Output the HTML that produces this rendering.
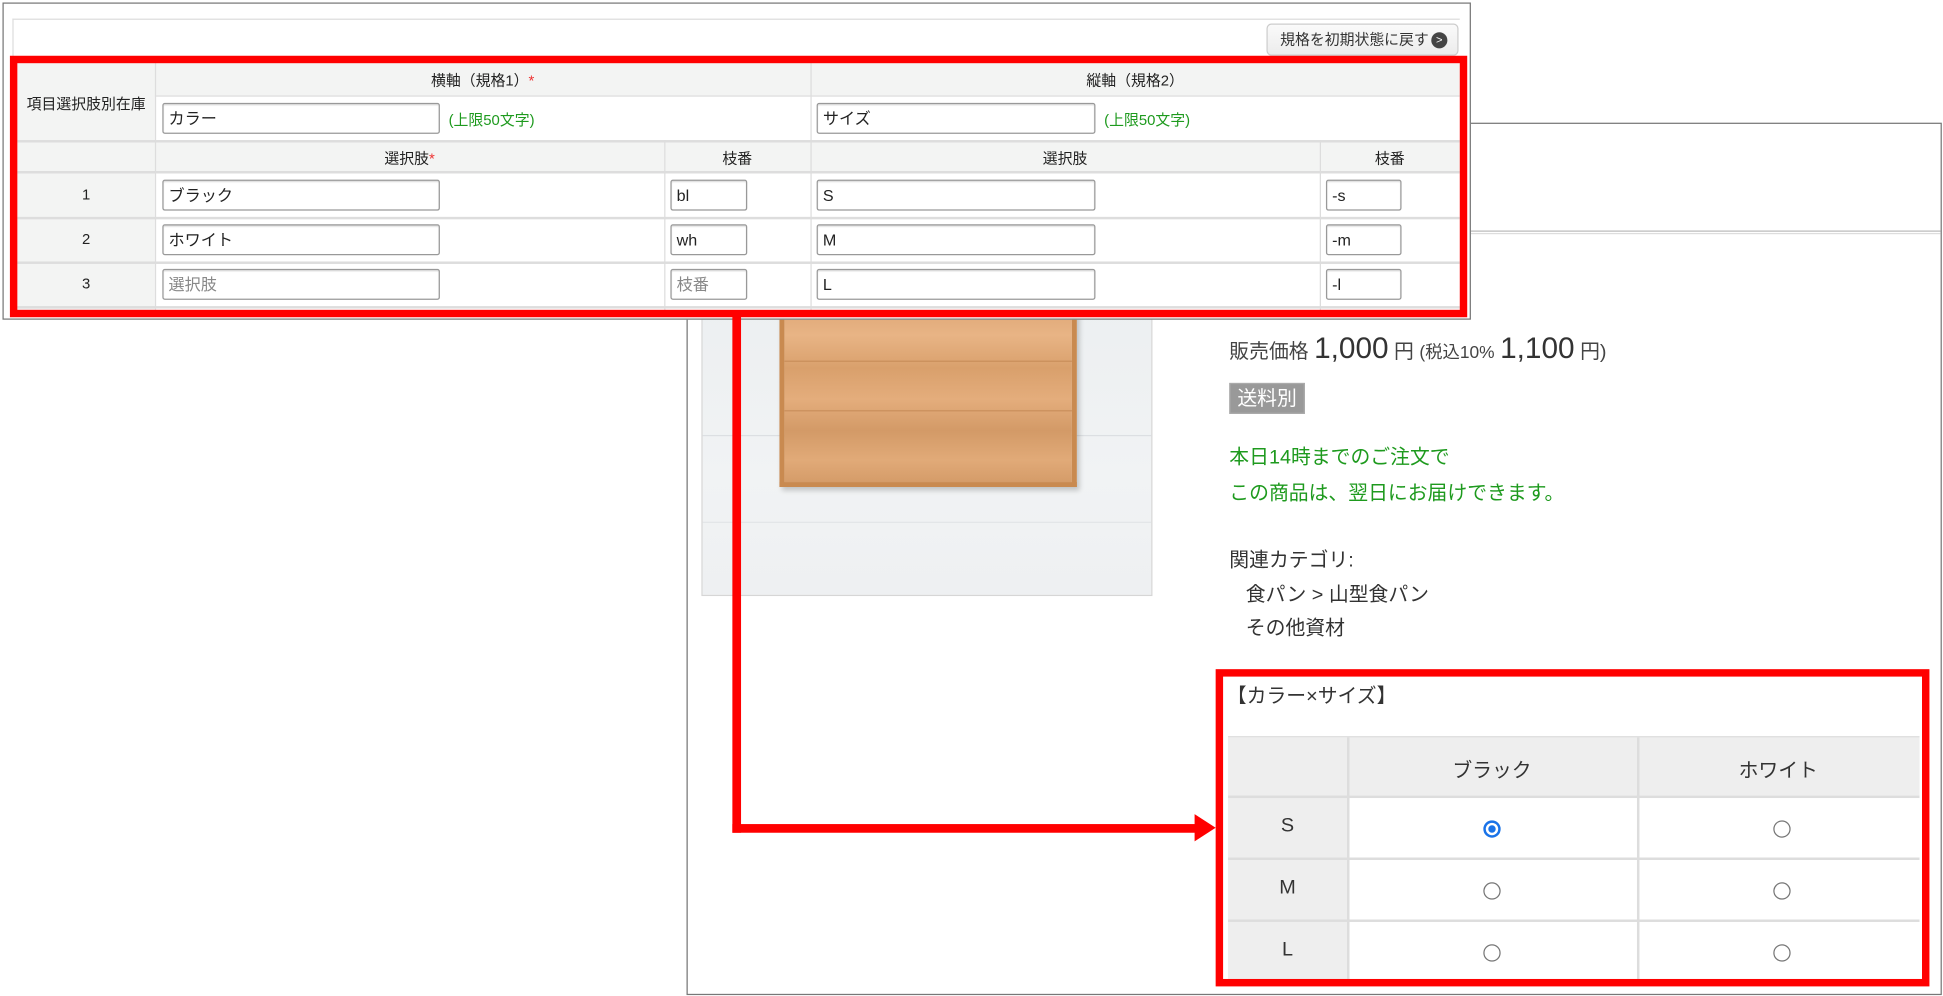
<!DOCTYPE html>
<html><head><meta charset="utf-8"><style>
*{box-sizing:border-box;margin:0;padding:0}
html,body{width:1943px;height:996px;overflow:hidden;background:#fff}
#w{position:absolute;left:0;top:0;width:1568px;height:804px;transform:scale(1.2392);transform-origin:0 0;font-family:"Liberation Sans","Noto Sans CJK JP",sans-serif;color:#333}
.a{position:absolute}
.inp{position:absolute;height:25px;border:1px solid #999;border-radius:2px;background:#fff;font-size:13px;padding-left:4px;line-height:23px;color:#222;box-shadow:inset 0 1px 1px #ddd}
.ph{color:#888}
.c{position:absolute;font-size:12px;text-align:center;color:#222}
.hl{position:absolute;height:1px;background:#ddd}
.vl{position:absolute;width:1px;background:#ddd}
.red{position:absolute;background:#f00}
.t2{font-size:16px;color:#333}
.rad{position:absolute;width:14px;height:14px;border:1px solid #767676;border-radius:50%;background:#fff}
</style></head><body><div id="w">
<div class="a" style="left:554px;top:99px;width:1013px;height:704px;border:1px solid #777;background:#fff"></div>
<div class="a" style="left:555px;top:186px;width:1011px;height:3px;border-top:1px solid #bbb;border-bottom:1px solid #ddd"></div>
<div class="a" style="left:566px;top:240px;width:364px;height:241px;background:linear-gradient(180deg,#eceff1,#f1f3f4 60%,#eef0f2);border:1px solid #d6d6d6">
 <div class="a" style="left:0;top:110px;width:362px;height:1px;background:#dcdfe2"></div>
 <div class="a" style="left:0;top:180px;width:362px;height:1px;background:#e2e5e7"></div>
 <div class="a" style="left:62px;top:0;width:240px;height:152px;background:linear-gradient(180deg,#dca372 0%,#e8b485 20%,#d9a06c 38%,#e4ad7c 55%,#d39a67 72%,#e1aa78 88%,#d59c69 100%);border:4px solid #c98a50;border-top:none;box-shadow:2px 3px 4px rgba(0,0,0,.2)">
  <div class="a" style="left:0;top:50px;width:232px;height:1px;background:#c98f5c"></div>
  <div class="a" style="left:0;top:90px;width:232px;height:1px;background:#c98f5c"></div>
 </div>
</div>
<div class="a t2" style="left:992px;top:268px;white-space:nowrap;color:#444">販売価格 <span style="font-size:24px;color:#333">1,000</span> 円 <span style="font-size:14px">(税込10%</span> <span style="font-size:24px;color:#333">1,100</span> 円)</div>
<div class="a" style="left:992px;top:309px;width:61px;height:25px;background:#999;color:#fff;font-size:16px;line-height:25px;text-align:center;border:1px solid #aaa">送料別</div>
<div class="a t2" style="left:992px;top:355px;color:#1e9a1e;line-height:29px">本日14時までのご注文で<br>この商品は、翌日にお届けできます。</div>
<div class="a t2" style="left:992px;top:439px;line-height:27.5px;color:#333">関連カテゴリ:<br>&nbsp;&nbsp;&nbsp;食パン &gt; 山型食パン<br>&nbsp;&nbsp;&nbsp;その他資材</div>
<div class="a t2" style="left:990px;top:548px">【カラー×サイズ】</div>
<div class="a" style="left:991px;top:594px;width:558px;height:196px;background:#fff;border-top:2px solid #ddd"></div>
<div class="a" style="left:991px;top:595px;width:558px;height:47px;background:#eee"></div>
<div class="a" style="left:991px;top:595px;width:96px;height:196px;background:#eee"></div>
<div class="hl" style="left:991px;top:642px;width:558px;height:2px"></div>
<div class="hl" style="left:991px;top:692px;width:558px;height:2px"></div>
<div class="hl" style="left:991px;top:742px;width:558px;height:2px"></div>
<div class="vl" style="left:1087px;top:595px;height:196px;width:2px"></div>
<div class="vl" style="left:1321px;top:595px;height:196px;width:2px"></div>
<div class="a t2" style="left:1087px;top:608px;width:234px;text-align:center">ブラック</div>
<div class="a t2" style="left:1321px;top:608px;width:228px;text-align:center">ホワイト</div>
<div class="a t2" style="left:991px;top:658px;width:96px;text-align:center">S</div>
<div class="a t2" style="left:991px;top:708px;width:96px;text-align:center">M</div>
<div class="a t2" style="left:991px;top:758px;width:96px;text-align:center">L</div>
<div class="rad" style="left:1197px;top:662px;border:2px solid #1a73e8"><div class="a" style="left:2px;top:2px;width:6px;height:6px;border-radius:50%;background:#1a73e8"></div></div>
<div class="rad" style="left:1431px;top:662px"></div>
<div class="rad" style="left:1197px;top:712px"></div>
<div class="rad" style="left:1431px;top:712px"></div>
<div class="rad" style="left:1197px;top:762px"></div>
<div class="rad" style="left:1431px;top:762px"></div>
<div class="a" style="left:981px;top:540px;width:576px;height:256px;border:6px solid #f00"></div>
<div class="a" style="left:2px;top:2px;width:1185px;height:256px;border:1px solid #777;background:#fff"></div>
<div class="a" style="left:10px;top:15px;width:1168px;height:240px;border-top:1px solid #ddd;border-left:1px solid #ddd"></div>
<div class="a" style="left:1022px;top:19px;width:155px;height:26px;border:1px solid #ccc;border-radius:4px;background:linear-gradient(#fafafa,#ececec);font-size:12px;line-height:24px;padding-left:10px;color:#333">規格を初期状態に戻す<span class="a" style="left:132px;top:6px;width:13px;height:13px;border-radius:50%;background:#444;color:#fff;font-size:9px;line-height:13px;text-align:center">&gt;</span></div>
<div class="a" style="left:14px;top:50px;width:1164px;height:27px;background:#f3f4f3"></div>
<div class="a" style="left:14px;top:113px;width:1164px;height:25px;background:#f3f4f3"></div>
<div class="a" style="left:14px;top:50px;width:111px;height:200px;background:#f3f4f3"></div>
<div class="hl" style="left:125px;top:77px;width:1053px"></div>
<div class="hl" style="left:14px;top:113px;width:1164px;height:2px"></div>
<div class="hl" style="left:14px;top:138px;width:1164px;height:2px"></div>
<div class="hl" style="left:14px;top:175px;width:1164px;height:2px"></div>
<div class="hl" style="left:14px;top:211px;width:1164px;height:2px"></div>
<div class="hl" style="left:14px;top:247px;width:1164px;height:2px"></div>
<div class="vl" style="left:125px;top:50px;height:200px"></div>
<div class="vl" style="left:654px;top:50px;height:200px"></div>
<div class="vl" style="left:536px;top:113px;height:137px"></div>
<div class="vl" style="left:1065px;top:113px;height:137px"></div>
<div class="c" style="left:125px;top:56px;width:529px">横軸（規格1）<span style="color:#e33">*</span></div>
<div class="c" style="left:654px;top:56px;width:524px">縦軸（規格2）</div>
<div class="c" style="left:14px;top:75px;width:111px">項目選択肢別在庫</div>
<div class="inp" style="left:131px;top:83px;width:224px">カラー</div>
<div class="a" style="left:362px;top:88px;font-size:12px;color:#1e9a1e">(上限50文字)</div>
<div class="inp" style="left:659px;top:83px;width:225px">サイズ</div>
<div class="a" style="left:891px;top:88px;font-size:12px;color:#1e9a1e">(上限50文字)</div>
<div class="c" style="left:125px;top:119px;width:411px">選択肢<span style="color:#e33">*</span></div>
<div class="c" style="left:536px;top:119px;width:118px">枝番</div>
<div class="c" style="left:654px;top:119px;width:411px">選択肢</div>
<div class="c" style="left:1065px;top:119px;width:113px">枝番</div>
<div class="c" style="left:14px;top:150px;width:111px">1</div>
<div class="c" style="left:14px;top:186px;width:111px">2</div>
<div class="c" style="left:14px;top:222px;width:111px">3</div>
<div class="inp" style="left:131px;top:145px;width:224px">ブラック</div>
<div class="inp" style="left:541px;top:145px;width:62px">bl</div>
<div class="inp" style="left:659px;top:145px;width:225px">S</div>
<div class="inp" style="left:1070px;top:145px;width:61px">-s</div>
<div class="inp" style="left:131px;top:181px;width:224px">ホワイト</div>
<div class="inp" style="left:541px;top:181px;width:62px">wh</div>
<div class="inp" style="left:659px;top:181px;width:225px">M</div>
<div class="inp" style="left:1070px;top:181px;width:61px">-m</div>
<div class="inp ph" style="left:131px;top:217px;width:224px">選択肢</div>
<div class="inp ph" style="left:541px;top:217px;width:62px">枝番</div>
<div class="inp" style="left:659px;top:217px;width:225px">L</div>
<div class="inp" style="left:1070px;top:217px;width:61px">-l</div>
<div class="a" style="left:8px;top:45px;width:1176px;height:211px;border:6px solid #f00"></div>
<div class="red" style="left:591px;top:255px;width:7px;height:417px"></div>
<div class="red" style="left:591px;top:665px;width:376px;height:7px"></div>
<div class="a" style="left:964px;top:657px;width:0;height:0;border-top:11px solid transparent;border-bottom:11px solid transparent;border-left:17px solid #f00"></div>
</div></body></html>
